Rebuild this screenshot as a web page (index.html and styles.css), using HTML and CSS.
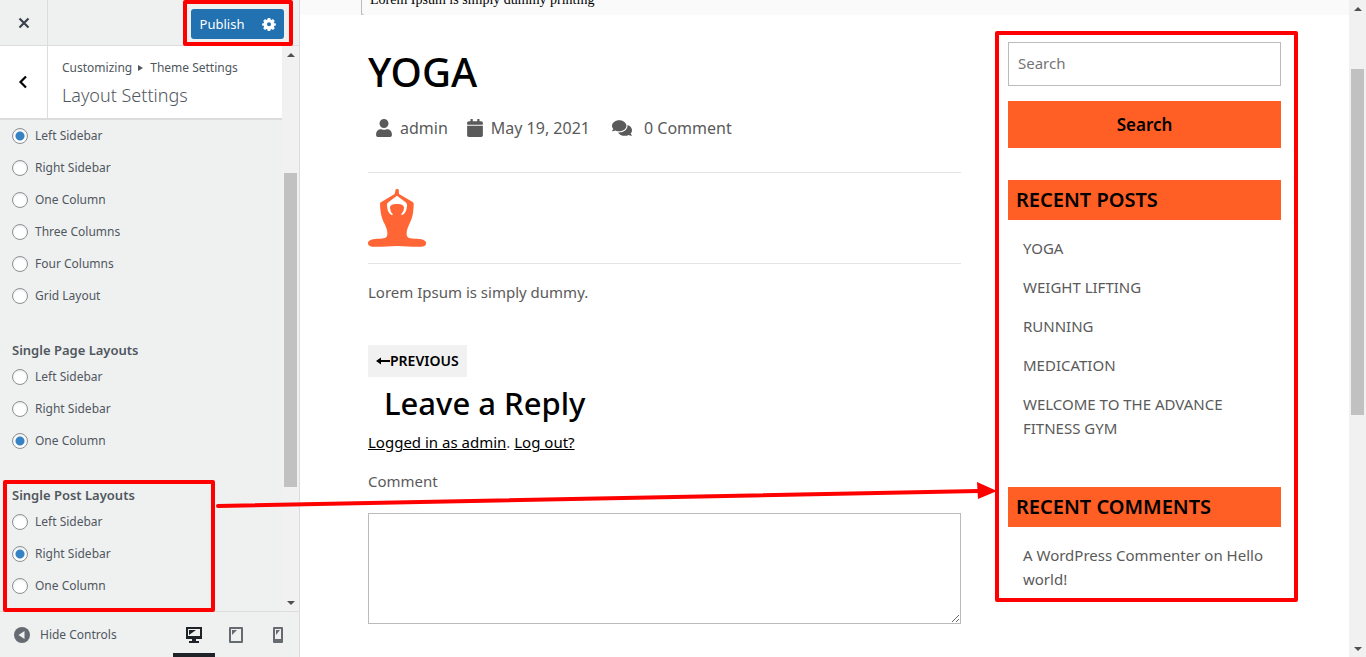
FILE: index.html
```html
<!DOCTYPE html>
<html lang="en">
<head>
<meta charset="utf-8">
<meta name="viewport" content="width=device-width, initial-scale=1">
<title>Customize: Layout Settings</title>
<link rel="stylesheet" href="styles.css">
</head>
<body>
<div class="customizer">
  <aside class="panel">
    <header class="panel-header">
      <button class="close" type="button" aria-label="Close"><svg width="12" height="12" viewBox="0 0 12 12"><path d="M1.500 1.500l9 9M10.500 1.500l-9 9" stroke="#3c434a" stroke-width="2.200"/></svg></button>
      <div class="publish-group">
        <button class="publish" type="button">Publish</button>
        <button class="gear" type="button" aria-label="Publish settings"><svg width="14" height="14" viewBox="0 0 14 14"><path fill="#fff" fill-rule="evenodd" d="M5.700 1h2.600l.3 1.600 1 .4 1.400-.9 1.800 1.800-.9 1.400.4 1 1.600.3v1.900l-1.600.3-.4 1 .9 1.400-1.800 1.800-1.400-.9-1 .4-.3 1.500H5.700l-.3-1.500-1-.4-1.400.9-1.800-1.800.9-1.400-.4-1L.1 8.500V6.600l1.600-.3.4-1-.9-1.400L3 2.100l1.400.9 1-.4zM7 5.200a2 2 0 1 0 0 4 2 2 0 0 0 0-4z"/></svg></button>
        <span class="mark mark-publish"></span>
      </div>
    </header>
    <div class="panel-main">
      <div class="panel-content">
        <div class="section-head">
          <button class="back" type="button" aria-label="Back"><svg width="12" height="14" viewBox="0 0 12 14"><path d="M8 1.500L2.500 7 8 12.500" fill="none" stroke="#000" stroke-width="2.200"/></svg></button>
          <div class="section-title">
            <p class="crumbs">Customizing <svg width="6" height="6" viewBox="0 0 6 6"><path d="M0 0l5 3-5 3z" fill="#50575e"/></svg> Theme Settings</p>
            <h3>Layout Settings</h3>
          </div>
        </div>
        <div class="controls">
          <div class="group" role="radiogroup" aria-label="Post Layouts">
            <label><input type="radio" name="blog" checked>Left Sidebar</label>
            <label><input type="radio" name="blog">Right Sidebar</label>
            <label><input type="radio" name="blog">One Column</label>
            <label><input type="radio" name="blog">Three Columns</label>
            <label><input type="radio" name="blog">Four Columns</label>
            <label><input type="radio" name="blog">Grid Layout</label>
          </div>
          <div class="group" role="radiogroup" aria-labelledby="page-layouts">
            <h4 id="page-layouts">Single Page Layouts</h4>
            <label><input type="radio" name="page">Left Sidebar</label>
            <label><input type="radio" name="page">Right Sidebar</label>
            <label><input type="radio" name="page" checked>One Column</label>
          </div>
          <div class="group" role="radiogroup" aria-labelledby="post-layouts">
            <h4 id="post-layouts">Single Post Layouts</h4>
            <label><input type="radio" name="post">Left Sidebar</label>
            <label><input type="radio" name="post" checked>Right Sidebar</label>
            <label><input type="radio" name="post">One Column</label>
            <span class="mark mark-layouts"></span>
          </div>
        </div>
      </div>
      <div class="scrollbar" aria-hidden="true">
        <span class="arrow up"></span><span class="before-panel"></span><span class="thumb thumb-panel"></span><span class="after-panel"></span><span class="arrow down"></span>
      </div>
    </div>
    <footer class="panel-footer">
      <button class="hide" type="button"><svg width="16" height="16" viewBox="0 0 16 16"><circle cx="8" cy="8" r="8" fill="#656b71"/><path d="M10.500 4v8L4.500 8z" fill="#eff1f1"/></svg>Hide Controls</button>
      <div class="devices">
        <button class="device active" type="button" aria-label="Desktop"><svg width="16" height="16" viewBox="0 0 16 16"><path fill="#1d2327" fill-rule="evenodd" d="M0 0h16v12h-6v2h3v2H3v-2h3v-2H0zM2 2v7h12V2z"/><path d="M3 3h7L3 8z" fill="#1d2327"/></svg></button>
        <button class="device" type="button" aria-label="Tablet"><svg width="16" height="16" viewBox="0 0 16 16"><path fill="#656b71" fill-rule="evenodd" d="M2 0h12q1 0 1 1v14q0 1-1 1H2q-1 0-1-1V1q0-1 1-1zM3 2v12h10V2z"/><path d="M4 3h5L4 8z" fill="#656b71"/></svg></button>
        <button class="device" type="button" aria-label="Mobile"><svg width="16" height="16" viewBox="0 0 16 16"><path fill="#656b71" fill-rule="evenodd" d="M4 0h8q1 0 1 1v14q0 1-1 1H4q-1 0-1-1V1q0-1 1-1zM5 2v10h6V2z"/><path d="M6 3h4L6 8z" fill="#656b71"/></svg></button>
      </div>
    </footer>
  </aside>

  <div class="preview">
    <div class="page">
      <div class="strip"><p>Lorem Ipsum is simply dummy printing</p></div>
      <div class="columns">
        <main class="post">
          <h1>YOGA</h1>
          <div class="meta">
            <span><svg width="18" height="18" viewBox="-32 0 512 512"><path d="M224 256c70.700 0 128-57.300 128-128S294.700 0 224 0 96 57.300 96 128s57.300 128 128 128zm89.600 32h-16.700c-22.200 10.200-46.900 16-72.900 16s-50.600-5.800-72.900-16h-16.700C60.200 288 0 348.200 0 422.400V464c0 26.500 21.500 48 48 48h352c26.500 0 48-21.500 48-48v-41.600c0-74.200-60.200-134.400-134.400-134.400z"/></svg>admin</span>
            <span><svg width="18" height="18" viewBox="-32 0 512 512"><path d="M12 192h424c6.600 0 12 5.400 12 12v260c0 26.500-21.500 48-48 48H48c-26.500 0-48-21.500-48-48V204c0-6.600 5.400-12 12-12zm436-44v-36c0-26.500-21.500-48-48-48h-48V12c0-6.600-5.400-12-12-12h-40c-6.600 0-12 5.400-12 12v52H160V12c0-6.600-5.400-12-12-12h-40c-6.600 0-12 5.400-12 12v52H48C21.500 64 0 85.500 0 112v36c0 6.600 5.400 12 12 12h424c6.600 0 12-5.400 12-12z"/></svg>May 19, 2021</span>
            <span class="comments"><svg width="20" height="18" viewBox="0 0 576 512"><path d="M416 192c0-88.400-93.100-160-208-160S0 103.600 0 192c0 34.300 14.100 65.900 38 92-13.400 30.200-35.500 54.200-35.800 54.500-2.200 2.300-2.800 5.700-1.500 8.700S4.800 352 8 352c36.600 0 66.900-12.300 88.700-25 32.200 15.700 70.300 25 111.300 25 114.900 0 208-71.600 208-160zm122 220c23.900-26 38-57.700 38-92 0-66.900-53.500-124.200-129.300-148.100.9 6.600 1.300 13.300 1.300 20.100 0 105.900-107.700 192-240 192-10.800 0-21.300-.8-31.700-1.900C207.800 439.600 281.800 480 368 480c41 0 79.100-9.200 111.300-25 21.800 12.700 52.100 25 88.700 25 3.200 0 6.100-1.900 7.300-4.800 1.300-2.900.7-6.300-1.500-8.700-.3-.3-22.400-24.200-35.800-54.500z"/></svg>0 Comment</span>
          </div>
          <div class="figure">
            <svg width="58" height="58" viewBox="24 27 174 174" role="img" aria-label="Yoga pose"><path fill="#ff6535" fill-rule="evenodd" d="M107 28Q111 26 116 28L117 42 158 66Q162 69 161 74C160 105 156 115 148 132C141 147 138 158 141 168C144 175 152 176 180 177C204 179 204 200 184 200C160 202 140 198 111 198C82 198 62 202 38 200C18 200 18 178 44 177C70 176 78 175 81 168C84 158 81 147 74 132C65 115 61 100 60 72Q60 68 64 66L104 42ZM111 47L86 66Q80 70 81 77C82 90 86 103 98 105V102Q91 96 90 84C90 75 97 72 111 72C125 72 132 75 132 84Q132 95 124 102V105C136 103 140 90 141 77Q142 70 136 66Z"/></svg>
          </div>
          <p class="text">Lorem Ipsum is simply dummy.</p>
          <a class="previous" href="#"><svg width="14" height="8" viewBox="0 0 14 8"><path d="M0 4l5-3.500V3h9v2H5v2.500z"/></svg>PREVIOUS</a>
          <h2>Leave a Reply</h2>
          <p class="login"><a href="#">Logged in as admin</a>. <a href="#">Log out?</a></p>
          <label class="comment-label" for="comment">Comment</label>
          <textarea id="comment"></textarea>
        </main>
        <aside class="widgets">
          <form class="search" onsubmit="return false">
            <input type="search" placeholder="Search" aria-label="Search">
            <button type="submit">Search</button>
          </form>
          <section class="widget">
            <h3>RECENT POSTS</h3>
            <ul>
              <li><a href="#">YOGA</a></li>
              <li><a href="#">WEIGHT LIFTING</a></li>
              <li><a href="#">RUNNING</a></li>
              <li><a href="#">MEDICATION</a></li>
              <li><a href="#">WELCOME TO THE ADVANCE FITNESS GYM</a></li>
            </ul>
          </section>
          <section class="widget">
            <h3>RECENT COMMENTS</h3>
            <ul>
              <li><a href="#">A WordPress Commenter on Hello world!</a></li>
            </ul>
          </section>
          <span class="mark mark-widgets"></span>
        </aside>
      </div>
    </div>
    <div class="scrollbar" aria-hidden="true">
      <span class="arrow up"></span><span class="before-page"></span><span class="thumb thumb-page"></span><span class="after-page"></span><span class="arrow down"></span>
    </div>
  </div>
  <svg class="pointer" width="784" height="30" viewBox="0 0 784 30" aria-hidden="true"><path d="M4 24L765 9" stroke="#f00" stroke-width="4" stroke-linecap="round"/><path d="M763 0l20 9-19 8z" fill="#f00"/></svg>
</div>
</body>
</html>
```
FILE: styles.css
```css
* { box-sizing: border-box; }
body, h1, h2, h3, h4, p, ul { margin: 0; padding: 0; }
button { border: 0; padding: 0; background: none; font: inherit; color: inherit; cursor: pointer; }
svg { display: block; flex: none; }

.customizer {
  position: relative;
  display: flex;
  height: 100vh;
  overflow: hidden;
}

/* Controls panel */
.panel {
  display: flex;
  flex-direction: column;
  flex: none;
  width: 300px;
  background: #eff1f1;
  border-right: 1px solid #dcdcde;
  font: 12px/20px "Noto Sans", sans-serif;
  color: #50575e;
}
.panel-header {
  display: flex;
  justify-content: space-between;
  align-items: center;
  height: 46px;
  border-bottom: 1px solid #dcdcde;
}
.close {
  display: grid;
  place-items: center;
  align-self: stretch;
  width: 48px;
  border-right: 1px solid #dcdcde;
}
.publish-group {
  position: relative;
  display: flex;
  height: 30px;
  margin: 2px 15px 0 0;
  border-radius: 3px;
  background: #2271b1;
  color: #fff;
}
.publish { width: 62px; font-size: 13px; }
.gear { display: grid; place-items: center; width: 31px; }

.panel-main { display: flex; flex: 1; min-height: 0; }
.panel-content { flex: 1; }
.section-head {
  display: flex;
  height: 74px;
  background: #fff;
  border-bottom: 2px solid #dcdcde;
}
.back {
  display: grid;
  place-items: center;
  width: 48px;
  border-right: 1px solid #dcdcde;
}
.section-title { padding: 12px 14px; }
.crumbs { display: flex; align-items: center; gap: 6px; }
.section-title h3 { font-size: 18px; font-weight: 300; line-height: 34px; }

.controls { display: flex; flex-direction: column; gap: 27px; padding-left: 12px; }
.group { position: relative; }
.group h4 { font-size: 13px; font-weight: 600; line-height: 22px; }
.group label { display: flex; align-items: center; gap: 7px; height: 32px; }
.group input {
  appearance: none;
  width: 16px;
  height: 16px;
  margin: 0;
  border: 1px solid #8c8f94;
  border-radius: 50%;
  background: #fff;
  box-shadow: inset 0 1px 2px rgba(0, 0, 0, .1);
}
.group input:checked { background: radial-gradient(circle, #3582c4 4px, #fff 5px); }

.panel-footer {
  display: flex;
  justify-content: space-between;
  height: 46px;
  border-top: 1px solid #dcdcde;
}
.hide { display: flex; align-items: center; gap: 10px; padding-left: 14px; }
.devices { display: flex; }
.device {
  display: grid;
  place-items: center;
  width: 42px;
  padding-top: 4px;
  border-bottom: 4px solid transparent;
}
.device.active { border-color: #1d2327; }

/* Scrollbars */
.scrollbar {
  display: flex;
  flex-direction: column;
  flex: none;
  width: 17px;
  padding: 0 2px;
  background: #f1f1f1;
}
.arrow { display: grid; place-items: center; height: 17px; }
.arrow::before { content: ""; border: 4px solid transparent; }
.up::before { border-top: 0; border-bottom-color: #505050; }
.down::before { border-bottom: 0; border-top-color: #505050; }
.thumb { background: #c1c1c1; }
.before-panel { flex: 110; }
.thumb-panel { flex: 314; }
.after-panel { flex: 107; }
.before-page { flex: 52; }
.thumb-page { flex: 346; }
.after-page { flex: 225; }

/* Site preview */
.preview { display: flex; flex: 1; min-width: 0; }
.page {
  flex: 1;
  min-width: 0;
  background: #fff;
  font: 15px/24px "Noto Sans", sans-serif;
  color: #5a5a5a;
}
.strip {
  display: flex;
  align-items: flex-end;
  height: 15px;
  padding-left: 62px;
  background: #fafafa;
  overflow: hidden;
}
.strip p {
  padding: 0 8px 6px;
  border-bottom-left-radius: 3px;
  box-shadow: -1px 1px 0 #bbb;
  background: #fafafa;
  color: #000;
  font: 14px/18px "Liberation Serif", serif;
}
.columns {
  display: grid;
  grid-template-columns: minmax(0, 1fr) 273px;
  align-items: start;
  gap: 47px;
  padding: 27px 68px 0;
}
.page a { color: inherit; text-decoration: none; }
.post { padding-top: 6px; }
h1, h2 { color: #000; font-weight: 500; }
h1 { font-size: 40px; line-height: 48px; }
.meta {
  display: flex;
  gap: 18px;
  padding: 20px 7px 32px;
  border-bottom: 1px solid #e4e4e4;
  font-size: 16px;
}
.meta span { display: flex; align-items: center; gap: 7px; }
.meta .comments { gap: 12px; padding-left: 4px; }
.meta svg { fill: #5a5a5a; }
.figure { padding: 16px 0; border-bottom: 1px solid #e4e4e4; }
.text { padding: 16px 0 41px; }
.page .previous {
  display: inline-flex;
  align-items: center;
  height: 32px;
  padding: 0 8px;
  background: #f1f1f1;
  color: #000;
  font-size: 14px;
  font-weight: 600;
  vertical-align: top;
}
h2 { padding-left: 16px; font-size: 31px; line-height: 53px; }
.login a { color: #000; text-decoration: underline; }
.comment-label { display: block; padding: 15px 0 20px; }
textarea {
  display: block;
  width: 100%;
  height: 111px;
  border: 1px solid #bbb;
  font: inherit;
  resize: vertical;
}

.widgets { position: relative; }
.search { display: grid; gap: 15px; }
.search input {
  width: 100%;
  height: 44px;
  padding: 0 9px 2px;
  border: 1px solid #bbb;
  font: inherit;
}
.search input::placeholder { color: #757575; }
.search button, .widget h3 { background: #ff5e24; color: #000; font-weight: 600; }
.search button { height: 47px; font-size: 17px; }
.widget { padding-top: 32px; }
.widget + .widget { padding-top: 47px; }
.widget h3 { padding: 0 8px; font-size: 20px; line-height: 40px; }
.widget ul {
  display: grid;
  gap: 15px;
  padding: 16px 0 0 15px;
  list-style: none;
}

/* Red callouts */
.mark {
  position: absolute;
  z-index: 1;
  border: 4px solid #f00;
  border-radius: 2px;
  pointer-events: none;
}
.mark-publish { inset: -9px -9px -7px -8px; }
.mark-layouts { top: -4px; bottom: -10px; left: -9px; width: 212px; }
.mark-widgets { inset: -11px -17px -11px -13px; }
.pointer { position: absolute; top: 482px; left: 214px; z-index: 2; pointer-events: none; }
```
